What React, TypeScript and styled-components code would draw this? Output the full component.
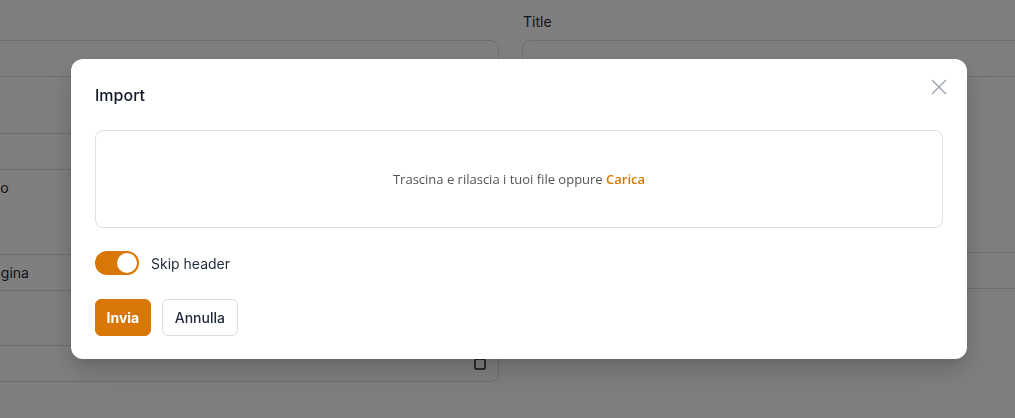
import styled, { createGlobalStyle } from 'styled-components';

const GlobalStyle = createGlobalStyle`
  html, body {
    margin: 0;
    padding: 0;
    background: #ffffff;
    overflow: hidden;
    font-family: Inter, "Noto Sans", sans-serif;
  }
  * { box-sizing: border-box; }
`;

const Page = styled.div`
  display: grid;
  grid-template-columns: 528px 528px;
  column-gap: 23px;
  margin-left: -29px;
  padding-top: 12px;
`;

const Column = styled.div`
  display: flex;
  flex-direction: column;
  gap: 28px;
`;

const Field = styled.div<{ $shift?: number; $width?: number }>`
  display: flex;
  flex-direction: column;
  margin-top: ${(p) => p.$shift ?? 0}px;
  width: ${(p) => (p.$width ? `${p.$width}px` : 'auto')};
`;

const Label = styled.label`
  min-height: 20px;
  font-size: 14px;
  line-height: 20px;
  color: #1f2937;
  margin-bottom: 8px;
  padding-left: 1px;
`;

const Input = styled.div<{ $flat?: boolean }>`
  height: 37px;
  border: 1px solid #dedede;
  border-radius: ${(p) => (p.$flat ? '0 0 8px 8px' : '8px')};
  margin-top: ${(p) => (p.$flat ? '-1px' : '0')};
  padding: 0 12px;
  display: flex;
  align-items: center;
  justify-content: space-between;
  font-size: 14px;
  color: #1f2937;
`;

const TextArea = styled.div<{ $h: number }>`
  height: ${(p) => p.$h}px;
  border: 1px solid #dedede;
  border-radius: 8px;
`;

const Toolbar = styled.div`
  height: 37px;
  border: 1px solid #dedede;
  border-radius: 8px 8px 0 0;
`;

const EditorBody = styled.div`
  height: 85px;
  border: 1px solid #dedede;
  border-top: none;
  padding: 8px 12px;
  font-size: 14px;
  line-height: 20px;
  color: #1f2937;
`;

const Overlay = styled.div`
  position: fixed;
  inset: 0;
  background: rgba(0, 0, 0, 0.5);
  display: flex;
  align-items: center;
  padding-left: 71px;
`;

const Modal = styled.div`
  position: relative;
  width: 896px;
  background: #ffffff;
  border-radius: 12px;
  padding: 24px 24px 23px;
  display: flex;
  flex-direction: column;
  gap: 23px;
  box-shadow: 0 12px 28px rgba(0, 0, 0, 0.18), 0 4px 8px rgba(0, 0, 0, 0.06);
`;

const Title = styled.h2`
  margin: 0;
  font-size: 16px;
  line-height: 24px;
  font-weight: 500;
  color: #111827;
`;

const CloseButton = styled.button`
  position: absolute;
  top: 20px;
  right: 20px;
  width: 16px;
  height: 16px;
  padding: 0;
  border: none;
  background: none;
  color: #9ca3af;
  display: flex;
  align-items: center;
  justify-content: center;
  cursor: pointer;
`;

const DropZone = styled.div`
  height: 98px;
  border: 1px solid #e0e0e0;
  border-radius: 8px;
  display: flex;
  align-items: center;
  justify-content: center;
  font-family: "Open Sans", sans-serif;
  font-size: 13px;
  color: #555555;
`;

const UploadLink = styled.span`
  color: #d97706;
  font-weight: 600;
  cursor: pointer;
`;

const ToggleRow = styled.div`
  display: flex;
  align-items: center;
  gap: 12px;
  height: 24px;
  font-size: 14px;
  color: #1f2937;
`;

const Switch = styled.span<{ $on: boolean }>`
  width: 44px;
  height: 24px;
  border-radius: 12px;
  background: ${(p) => (p.$on ? '#d97706' : '#e5e7eb')};
  padding: 2px;
  display: flex;
  justify-content: ${(p) => (p.$on ? 'flex-end' : 'flex-start')};
`;

const Knob = styled.span`
  width: 20px;
  height: 20px;
  border-radius: 50%;
  background: #ffffff;
`;

const Actions = styled.div`
  display: flex;
  gap: 11px;
  margin-top: 1px;
`;

const Button = styled.button<{ $primary?: boolean }>`
  height: 37px;
  padding: 0 ${(p) => (p.$primary ? '10.5px' : '12px')};
  border-radius: 6px;
  border: 1px solid ${(p) => (p.$primary ? '#d97706' : '#dddddd')};
  background: ${(p) => (p.$primary ? '#d97706' : '#ffffff')};
  color: ${(p) => (p.$primary ? '#ffffff' : '#1f2937')};
  font-family: Inter, sans-serif;
  font-size: 14px;
  font-weight: ${(p) => (p.$primary ? 700 : 500)};
  cursor: pointer;
`;

export default function App() {
  return (
    <>
      <GlobalStyle />
      <Page>
        <Column>
          <Field>
            <Label />
            <Input />
          </Field>
          <Field>
            <Label />
            <Toolbar />
            <EditorBody>Tuo</EditorBody>
            <Input $flat>Pagina</Input>
          </Field>
          <Field $shift={-2}>
            <Label />
            <Input>
              <span />
              <svg width="12" height="12" viewBox="0 0 12 12" fill="none" stroke="#222" strokeWidth="1.5">
                <rect x="1" y="1" width="10" height="10" rx="1" />
              </svg>
            </Input>
          </Field>
        </Column>
        <Column>
          <Field>
            <Label>Title</Label>
            <Input />
          </Field>
          <Field $width={400}>
            <Label>Description</Label>
            <TextArea $h={63} />
          </Field>
          <Field>
            <Label>Slug</Label>
            <Input />
          </Field>
        </Column>
      </Page>
      <Overlay>
        <Modal>
          <CloseButton aria-label="Chiudi">
            <svg width="16" height="16" viewBox="0 0 16 16" fill="none" stroke="currentColor" strokeWidth="1.4" strokeLinecap="round">
              <path d="M1.5 1.5 L14.5 14.5 M14.5 1.5 L1.5 14.5" />
            </svg>
          </CloseButton>
          <Title>Import</Title>
          <DropZone>
            Trascina e rilascia i tuoi file oppure&nbsp;<UploadLink>Carica</UploadLink>
          </DropZone>
          <ToggleRow>
            <Switch $on>
              <Knob />
            </Switch>
            Skip header
          </ToggleRow>
          <Actions>
            <Button $primary>Invia</Button>
            <Button>Annulla</Button>
          </Actions>
        </Modal>
      </Overlay>
    </>
  );
}
